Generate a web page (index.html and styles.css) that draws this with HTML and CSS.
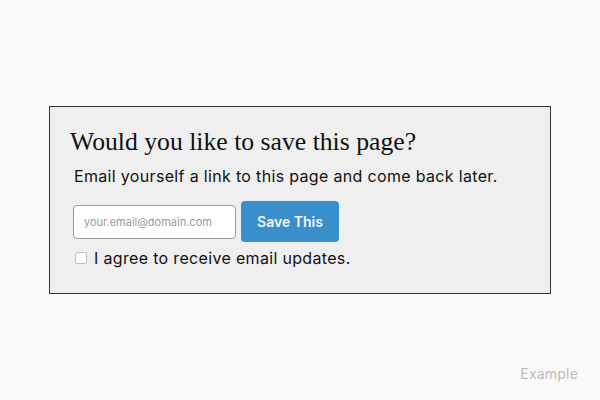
FILE: index.html
```html
<!DOCTYPE html>
<html>
<head>
<meta charset="utf-8">
<link rel="stylesheet" href="styles.css">
</head>
<body>
<div class="stage">
  <div class="card">
    <h1 class="title">Would you like to save this page?</h1>
    <p class="sub">Email yourself a link to this page and come back later.</p>
    <div class="form-row">
      <input class="email" type="text" placeholder="your.email@domain.com">
      <button class="save">Save This</button>
    </div>
    <label class="agree"><input class="check" type="checkbox"><span>I agree to receive email updates.</span></label>
  </div>
  <div class="tag">Example</div>
</div>
</body>
</html>
```
FILE: styles.css
```css
html, body {
  margin: 0;
  padding: 0;
  background: #fafafa;
}
.stage {
  width: 600px;
  height: 400px;
  display: flex;
  align-items: center;
  justify-content: center;
  position: relative;
  font-family: Inter, "Liberation Sans", sans-serif;
}
.card {
  box-sizing: border-box;
  width: 502px;
  height: 188px;
  border: 1px solid #333;
  background: #efefef;
  padding: 18px 23px 0 23px;
}
.title {
  margin: 0 0 0 -3px;
  font-family: "Liberation Serif", serif;
  font-weight: normal;
  font-size: 25.7px;
  line-height: 34px;
  color: #111;
}
.sub {
  margin: 6px 0 0 1px;
  font-size: 16px;
  line-height: 22px;
  letter-spacing: 0.33px;
  color: #111;
}
.form-row {
  display: flex;
  align-items: center;
  gap: 5px;
  margin-top: 14px;
}
.email {
  box-sizing: border-box;
  width: 163px;
  height: 34px;
  border: 1px solid #9a9a9a;
  border-radius: 4px;
  background: #fff;
  padding: 0 10px;
  font-family: Inter, "Liberation Sans", sans-serif;
  font-size: 11px;
  margin: 0;
}
.email::placeholder {
  color: #9a9a9a;
}
.save {
  box-sizing: border-box;
  width: 98px;
  height: 41px;
  border: none;
  border-radius: 4px;
  background: #388fcc;
  color: #f4f8fc;
  font-family: Inter, "Liberation Sans", sans-serif;
  font-size: 14px;
  font-weight: 600;
  margin: 0;
}
.agree {
  display: flex;
  align-items: center;
  gap: 7px;
  margin-top: 5px;
  margin-left: 2px;
  font-size: 16px;
  line-height: 22px;
  letter-spacing: 0.33px;
  color: #111;
}
.check {
  box-sizing: border-box;
  appearance: none;
  width: 12px;
  height: 12px;
  margin: 0;
  border: 1px solid #bdbdbd;
  border-radius: 2px;
  background: #fff;
}
.tag {
  position: absolute;
  right: 22px;
  bottom: 18px;
  font-size: 14px;
  letter-spacing: 0.2px;
  color: #bbb;
}
```
